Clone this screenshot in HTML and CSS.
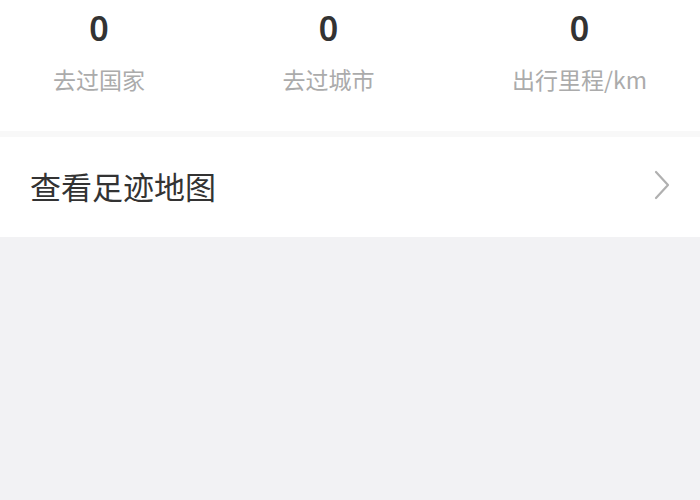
FILE: index.html
```html
<!DOCTYPE html>
<html lang="zh-CN">
<head>
<meta charset="utf-8">
<title>足迹</title>
<link rel="stylesheet" href="styles.css">
</head>
<body>
<div class="page">
  <section class="stats">
    <div class="stat">
      <div class="num">0</div>
      <div class="label">去过国家</div>
    </div>
    <div class="stat">
      <div class="num">0</div>
      <div class="label">去过城市</div>
    </div>
    <div class="stat">
      <div class="num">0</div>
      <div class="label">出行里程/km</div>
    </div>
  </section>
  <div class="divider"></div>
  <section class="row">
    <span class="row-title">查看足迹地图</span>
    <svg class="chevron" width="16" height="30" viewBox="0 0 16 30" aria-hidden="true">
      <path d="M2 2 L14 15 L2 28" fill="none" stroke="#b0b0b0" stroke-width="2.2" stroke-linecap="round" stroke-linejoin="round"/>
    </svg>
  </section>
  <section class="blank"></section>
</div>
</body>
</html>
```

FILE: styles.css
```css
html, body {
  margin: 0;
  padding: 0;
  background: #ffffff;
}

body {
  font-family: "Noto Sans", "Noto Sans CJK SC", sans-serif;
  width: 700px;
  height: 500px;
  overflow: hidden;
}

.page {
  display: flex;
  flex-direction: column;
  height: 500px;
}

.stats {
  height: 131px;
  box-sizing: border-box;
  padding: 7px 53px 0;
  display: flex;
  justify-content: space-between;
  align-items: flex-start;
}

.stat {
  display: flex;
  flex-direction: column;
  align-items: center;
}

.num {
  font-family: "Noto Sans", sans-serif;
  font-size: 34px;
  line-height: 42px;
  font-weight: 600;
  color: #333333;
}

.label {
  margin-top: 19px;
  font-family: "Noto Sans CJK SC", "Noto Sans", sans-serif;
  font-size: 23px;
  line-height: 23px;
  color: #ababab;
}

.divider {
  height: 6px;
  background: #f8f8f8;
}

.row {
  height: 100px;
  box-sizing: border-box;
  padding: 0 30px 4px;
  display: flex;
  align-items: center;
  justify-content: space-between;
}

.row-title {
  font-family: "Noto Sans CJK SC", sans-serif;
  font-size: 31px;
  line-height: 31px;
  color: #333333;
}

.chevron {
  display: block;
}

.blank {
  flex: 1;
  background: #f2f2f4;
}
```
